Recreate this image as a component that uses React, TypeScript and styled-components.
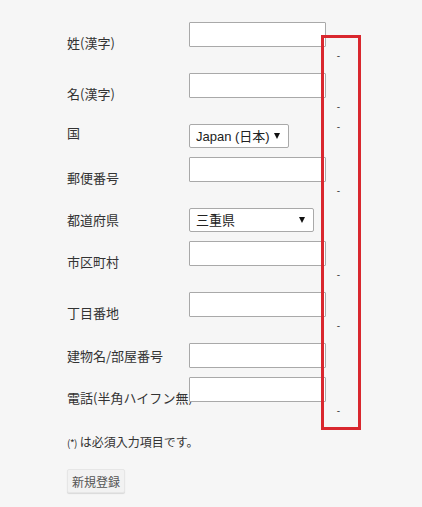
import React from "react";
import styled, { createGlobalStyle } from "styled-components";

const GlobalStyle = createGlobalStyle`
  html, body {
    margin: 0;
    padding: 0;
    background: #f6f6f6;
  }
  body {
    font-family: "Noto Sans CJK JP", "Liberation Sans", sans-serif;
    color: #333;
  }
`;

const Page = styled.div`
  position: relative;
  width: 422px;
  height: 507px;
  box-sizing: border-box;
  padding: 22px 0 0 67px;
`;

const Form = styled.form`
  display: flex;
  flex-direction: column;
  gap: 9px;
`;

const Row = styled.div<{ $note?: boolean }>`
  display: grid;
  grid-template-columns: 122px 137px 24px;
  grid-template-rows: ${(p) => (p.$note ? "25px 17px" : "auto")};
  justify-content: start;
`;

const Label = styled.label<{ $top?: boolean }>`
  grid-row: 1 / -1;
  grid-column: 1;
  align-self: ${(p) => (p.$top ? "start" : "center")};
  font-size: 13px;
  line-height: 18px;
  white-space: nowrap;
  color: #333;
`;

const Input = styled.input`
  grid-row: 1;
  grid-column: 2;
  display: block;
  width: 137px;
  height: 25px;
  box-sizing: border-box;
  margin: 0;
  border: 1px solid #a9a9a9;
  border-radius: 1px;
  background: #fff;
`;

const SelectBox = styled.div<{ $width: number }>`
  grid-row: 1;
  grid-column: 2;
  position: relative;
  width: ${(p) => p.$width}px;
  height: 24px;
`;

const Select = styled.select`
  display: block;
  appearance: none;
  width: 100%;
  height: 100%;
  margin: 0;
  box-sizing: border-box;
  border: 1px solid #a9a9a9;
  border-radius: 2px;
  background: #fff;
  padding: 0 0 0 6px;
  font-family: "Liberation Sans", "Noto Sans CJK JP", sans-serif;
  font-size: 13px;
  color: #222;
`;

const Arrow = styled.span`
  position: absolute;
  right: 9px;
  top: 9px;
  width: 0;
  height: 0;
  border-left: 3.5px solid transparent;
  border-right: 3.5px solid transparent;
  border-top: 6px solid #111;
  pointer-events: none;
`;

const Dash = styled.span<{ $top?: boolean }>`
  grid-column: 3;
  grid-row: ${(p) => (p.$top ? 1 : 2)};
  align-self: ${(p) => (p.$top ? "start" : "center")};
  margin-top: ${(p) => (p.$top ? "-2px" : "0")};
  padding-left: 1px;
  text-align: center;
  font-family: "Liberation Sans", sans-serif;
  font-size: 10px;
  line-height: 9px;
  color: #444;
`;

const Note = styled.p`
  margin: 14px 0 0;
  font-size: 12px;
  line-height: 18px;
  color: #333;
  small {
    font-size: 10px;
    letter-spacing: -0.5px;
  }
`;

const Button = styled.button`
  display: block;
  margin-top: 17px;
  height: 24px;
  padding: 0 4px;
  border: 1px solid #e6e6e6;
  border-radius: 2px;
  background: #f2f2f2;
  box-shadow: 0 1px 1px rgba(0, 0, 0, 0.12);
  font-family: "Noto Sans CJK JP", sans-serif;
  font-size: 12px;
  color: #555;
`;

const Highlight = styled.div`
  position: absolute;
  left: 321px;
  top: 35px;
  width: 40px;
  height: 395px;
  box-sizing: border-box;
  border: 3px solid #d9272e;
  pointer-events: none;
`;

type Field = {
  label: string;
  kind: "text" | "select";
  note?: boolean;
  options?: string[];
  width?: number;
  top?: boolean;
};

const fields: Field[] = [
  { label: "姓(漢字)", kind: "text", note: true },
  { label: "名(漢字)", kind: "text", note: true },
  { label: "国", kind: "select", options: ["Japan (日本)"], width: 100, top: true },
  { label: "郵便番号", kind: "text", note: true },
  { label: "都道府県", kind: "select", options: ["三重県"], width: 125 },
  { label: "市区町村", kind: "text", note: true },
  { label: "丁目番地", kind: "text", note: true },
  { label: "建物名/部屋番号", kind: "text" },
  { label: "電話(半角ハイフン無)", kind: "text", note: true },
];

export default function App() {
  return (
    <Page>
      <GlobalStyle />
      <Form onSubmit={(e) => e.preventDefault()}>
        {fields.map((f) => (
          <Row key={f.label} $note={f.note}>
            <Label $top={f.top}>{f.label}</Label>
            {f.kind === "text" ? (
              <Input type="text" />
            ) : (
              <SelectBox $width={f.width ?? 100}>
                <Select defaultValue={f.options?.[0]}>
                  {f.options?.map((o) => (
                    <option key={o}>{o}</option>
                  ))}
                </Select>
                <Arrow />
              </SelectBox>
            )}
            {f.note && <Dash>-</Dash>}
            {f.top && <Dash $top>-</Dash>}
          </Row>
        ))}
      </Form>
      <Note>
        <small>(*)</small> は必須入力項目です。
      </Note>
      <Button type="button">新規登録</Button>
      <Highlight />
    </Page>
  );
}
